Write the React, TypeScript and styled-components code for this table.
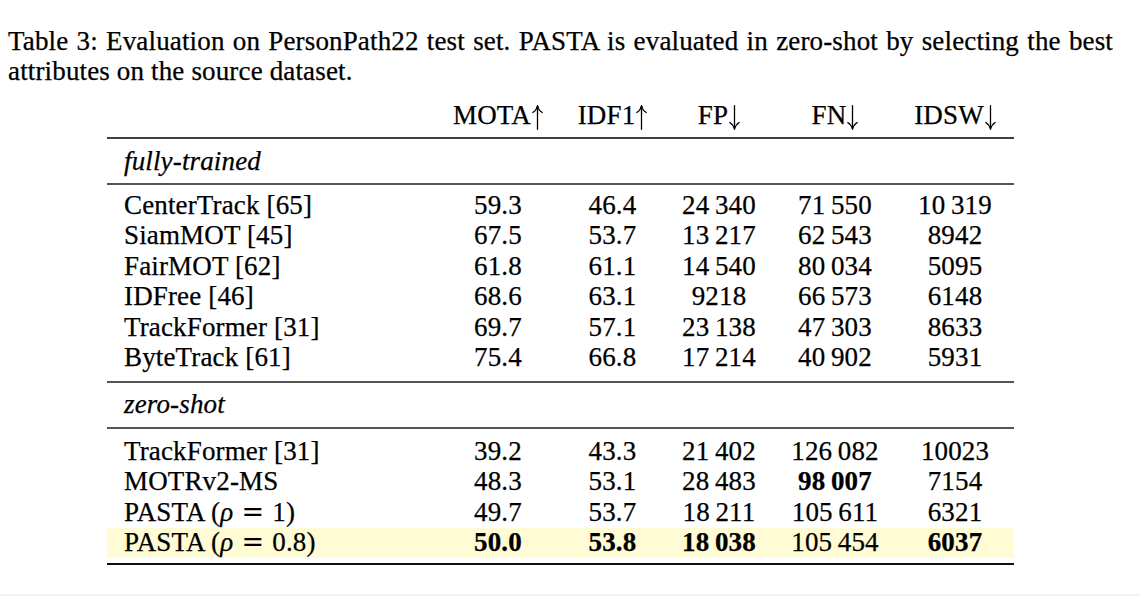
import React from "react";
import styled, { createGlobalStyle, css } from "styled-components";

const GlobalStyle = createGlobalStyle`
  html, body {
    margin: 0;
    padding: 0;
    background: #ffffff;
  }
  body {
    font-family: "Liberation Serif", "Times New Roman", serif;
    color: #000;
  }
`;

const Page = styled.div`
  box-sizing: border-box;
  width: 1140px;
  height: 596px;
  border-bottom: 2px solid #f1f1f1;
  padding-top: 26px;
  font-size: 27px;
  letter-spacing: 0.15px;
  -webkit-text-stroke: 0.25px #000;
`;

const Caption = styled.p`
  margin: 0 0 0 8px;
  width: 1105px;
  line-height: 30px;
  text-align: justify;
`;

const Table = styled.div`
  margin: 15px 0 0 107px;
  width: 907px;
`;

const COLS = "328px 126px 103px 110px 122px 118px";

const Row = styled.div<{ $highlight?: boolean }>`
  display: grid;
  grid-template-columns: ${COLS};
  line-height: 28px;
  padding-bottom: 2.4px;
  white-space: nowrap;
  ${(p) =>
    p.$highlight &&
    css`
      background: #fffbd4;
    `}
`;

const Header = styled.div`
  padding-bottom: 5px;
  border-bottom: 2px solid #404040;
`;

const Section = styled.div<{ $top: number; $bottom: number; $rule: string }>`
  padding-top: ${(p) => p.$top}px;
  padding-bottom: ${(p) => p.$bottom}px;
  border-bottom: 2px solid ${(p) => p.$rule};
`;

const NameCell = styled.span<{ $italic?: boolean }>`
  padding-left: 17px;
  text-align: left;
  font-style: ${(p) => (p.$italic ? "italic" : "normal")};
`;

const Cell = styled.span<{ $bold?: boolean }>`
  text-align: center;
  font-weight: ${(p) => (p.$bold ? 700 : 400)};
`;

const MathVar = styled.i`
  font-style: italic;
`;

const Eq = styled.span`
  font-family: "DejaVu Serif", serif;
  -webkit-text-stroke: 0;
  margin: 0 0.3em;
`;

const ArrowSvg = styled.svg`
  display: inline-block;
  width: 11px;
  height: 25px;
  margin-left: 1px;
  vertical-align: -6px;
  overflow: visible;
`;

const Arrow = ({ down }: { down?: boolean }) => (
  <ArrowSvg viewBox="0 0 11 25" aria-hidden="true">
    <g transform={down ? "rotate(180 5.5 12.5)" : undefined} fill="none" stroke="#000" strokeLinecap="round">
      <path d="M5.5 1.2 V24.3" strokeWidth="1.3" />
      <path d="M5.5 0.8 C4.8 3.6 3 6.2 0.8 7.6" strokeWidth="1.2" />
      <path d="M5.5 0.8 C6.2 3.6 8 6.2 10.2 7.6" strokeWidth="1.2" />
    </g>
  </ArrowSvg>
);

type Val = { v: string; b?: boolean };
type DataRow = { name: React.ReactNode; vals: Val[]; hl?: boolean };

const T = "\u2009";
const n = (v: string, b = false): Val => ({ v: v.replace(/ /g, T), b });

const fully: DataRow[] = [
  { name: "CenterTrack [65]", vals: [n("59.3"), n("46.4"), n("24 340"), n("71 550"), n("10 319")] },
  { name: "SiamMOT [45]", vals: [n("67.5"), n("53.7"), n("13 217"), n("62 543"), n("8942")] },
  { name: "FairMOT [62]", vals: [n("61.8"), n("61.1"), n("14 540"), n("80 034"), n("5095")] },
  { name: "IDFree [46]", vals: [n("68.6"), n("63.1"), n("9218"), n("66 573"), n("6148")] },
  { name: "TrackFormer [31]", vals: [n("69.7"), n("57.1"), n("23 138"), n("47 303"), n("8633")] },
  { name: "ByteTrack [61]", vals: [n("75.4"), n("66.8"), n("17 214"), n("40 902"), n("5931")] },
];

const Pasta = ({ rho }: { rho: string }) => (
  <>
    PASTA (<MathVar>ρ</MathVar>
    <Eq>=</Eq>
    {rho})
  </>
);

const zero: DataRow[] = [
  { name: "TrackFormer [31]", vals: [n("39.2"), n("43.3"), n("21 402"), n("126 082"), n("10023")] },
  { name: "MOTRv2-MS", vals: [n("48.3"), n("53.1"), n("28 483"), n("98 007", true), n("7154")] },
  { name: <Pasta rho="1" />, vals: [n("49.7"), n("53.7"), n("18 211"), n("105 611"), n("6321")] },
  {
    name: <Pasta rho="0.8" />,
    vals: [n("50.0", true), n("53.8", true), n("18 038", true), n("105 454"), n("6037", true)],
    hl: true,
  },
];

const headers: { label: string; down: boolean }[] = [
  { label: "MOTA", down: false },
  { label: "IDF1", down: false },
  { label: "FP", down: true },
  { label: "FN", down: true },
  { label: "IDSW", down: true },
];

const DataRows = ({ rows }: { rows: DataRow[] }) => (
  <>
    {rows.map((r, i) => (
      <Row key={i} $highlight={r.hl}>
        <NameCell>{r.name}</NameCell>
        {r.vals.map((c, j) => (
          <Cell key={j} $bold={c.b}>
            {c.v}
          </Cell>
        ))}
      </Row>
    ))}
  </>
);

export default function App() {
  return (
    <>
      <GlobalStyle />
      <Page>
        <Caption>
          Table 3: Evaluation on PersonPath22 test set. PASTA is evaluated in zero-shot by selecting the best
          attributes on the source dataset.
        </Caption>
        <Table>
          <Header>
            <Row>
              <NameCell />
              {headers.map((h) => (
                <Cell key={h.label}>
                  {h.label}
                  <Arrow down={h.down} />
                </Cell>
              ))}
            </Row>
          </Header>
          <Section $top={7.6} $bottom={5.6} $rule="#555555">
            <Row>
              <NameCell $italic>fully-trained</NameCell>
            </Row>
          </Section>
          <Section $top={6} $bottom={7.6} $rule="#555555">
            <DataRows rows={fully} />
          </Section>
          <Section $top={7} $bottom={6.6} $rule="#555555">
            <Row>
              <NameCell $italic>zero-shot</NameCell>
            </Row>
          </Section>
          <Section $top={8} $bottom={4.4} $rule="#111111">
            <DataRows rows={zero} />
          </Section>
        </Table>
      </Page>
    </>
  );
}
